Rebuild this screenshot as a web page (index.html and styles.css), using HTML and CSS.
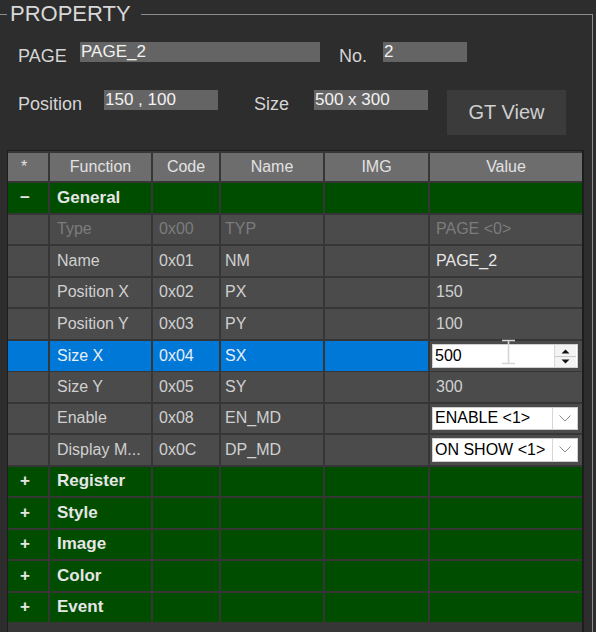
FILE: index.html
```html
<!DOCTYPE html>
<html lang="en">
<head>
  <meta charset="UTF-8">
  <title>Property</title>
  <link rel="stylesheet" href="styles.css">
</head>
<body>
  <fieldset class="panel">
    <legend>PROPERTY</legend>

    <div class="form-row row-page">
      <label class="lbl lbl-page" for="pageName">PAGE</label>
      <input type="text" id="pageName" class="field field-page" value="PAGE_2">
      <label class="lbl lbl-no" for="pageNo">No.</label>
      <input type="text" id="pageNo" class="field field-no" value="2">
    </div>

    <div class="form-row row-geo">
      <label class="lbl lbl-pos" for="pagePos">Position</label>
      <input type="text" id="pagePos" class="field field-small" value="150 , 100">
      <label class="lbl lbl-size" for="pageSize">Size</label>
      <input type="text" id="pageSize" class="field field-small" value="500 x 300">
      <button class="gt-btn">GT View</button>
    </div>

    <div class="prop-table">
      <div class="prop-row head">
        <div class="sign">*</div>
        <div>Function</div>
        <div>Code</div>
        <div>Name</div>
        <div>IMG</div>
        <div>Value</div>
      </div>

      <div class="prop-row group">
        <div class="sign">&minus;</div>
        <div>General</div>
        <div></div><div></div><div></div><div></div>
      </div>

      <div class="prop-row disabled">
        <div></div><div>Type</div><div>0x00</div><div class="name">TYP</div><div></div><div>PAGE &lt;0&gt;</div>
      </div>
      <div class="prop-row">
        <div></div><div>Name</div><div>0x01</div><div class="name">NM</div><div></div><div class="bright">PAGE_2</div>
      </div>
      <div class="prop-row">
        <div></div><div>Position X</div><div>0x02</div><div class="name">PX</div><div></div><div>150</div>
      </div>
      <div class="prop-row">
        <div></div><div>Position Y</div><div>0x03</div><div class="name">PY</div><div></div><div>100</div>
      </div>
      <div class="prop-row selected">
        <div></div><div>Size X</div><div>0x04</div><div class="name">SX</div><div></div>
        <div class="editor">
          <div class="spin">
            <span class="spin-text">500</span>
            <span class="spin-btns">
              <svg width="21" height="22" viewBox="0 0 21 22">
                <line x1="0" y1="11.5" x2="21" y2="11.5" stroke="#c9c9c9"/>
                <path d="M6.5 8.5 L10.5 4.5 L14.5 8.5 Z" fill="#111"/>
                <path d="M6.5 14.5 L10.5 18.5 L14.5 14.5 Z" fill="#111"/>
              </svg>
            </span>
            <svg class="ibeam" width="15" height="26" viewBox="0 0 15 26">
              <path d="M1 1.5 H14 M7.5 1.5 V24.5 M1 24.5 H14" stroke="#d6d6d6" stroke-width="1.6" fill="none"/>
            </svg>
          </div>
        </div>
      </div>
      <div class="prop-row">
        <div></div><div>Size Y</div><div>0x05</div><div class="name">SY</div><div></div><div>300</div>
      </div>
      <div class="prop-row">
        <div></div><div>Enable</div><div>0x08</div><div class="name">EN_MD</div><div></div>
        <div class="editor">
          <div class="combo">
            <span class="combo-text">ENABLE &lt;1&gt;</span>
            <span class="combo-btn">
              <svg width="12" height="7" viewBox="0 0 12 7"><path d="M0.5 0.5 L6 6 L11.5 0.5" stroke="#8a8a8a" fill="none"/></svg>
            </span>
          </div>
        </div>
      </div>
      <div class="prop-row">
        <div></div><div>Display M...</div><div>0x0C</div><div class="name">DP_MD</div><div></div>
        <div class="editor">
          <div class="combo">
            <span class="combo-text">ON SHOW &lt;1&gt;</span>
            <span class="combo-btn">
              <svg width="12" height="7" viewBox="0 0 12 7"><path d="M0.5 0.5 L6 6 L11.5 0.5" stroke="#8a8a8a" fill="none"/></svg>
            </span>
          </div>
        </div>
      </div>

      <div class="prop-row group">
        <div class="sign">+</div><div>Register</div><div></div><div></div><div></div><div></div>
      </div>
      <div class="prop-row group">
        <div class="sign">+</div><div>Style</div><div></div><div></div><div></div><div></div>
      </div>
      <div class="prop-row group">
        <div class="sign">+</div><div>Image</div><div></div><div></div><div></div><div></div>
      </div>
      <div class="prop-row group">
        <div class="sign">+</div><div>Color</div><div></div><div></div><div></div><div></div>
      </div>
      <div class="prop-row group">
        <div class="sign">+</div><div>Event</div><div></div><div></div><div></div><div></div>
      </div>
    </div>
  </fieldset>
</body>
</html>
```

FILE: styles.css
```css
html, body {
  margin: 0;
  height: 100%;
  overflow: hidden;
  background-color: #2d2d2d;
}

body {
  font-family: "Liberation Sans", Arial, sans-serif;
  color: #d4d4d4;
}

.panel {
  margin: 4px 3px 0 -2px;
  padding: 18px 8px 0 8px;
  border: 1px solid #8c8c8c;
  min-height: 700px;
  min-width: 0;
}

.panel legend {
  padding: 0 10px 0 3px;
  font-size: 22px;
  line-height: 20px;
  color: #d8d8d8;
}

.form-row {
  display: flex;
  align-items: flex-start;
}

.row-geo {
  margin-top: 24px;
}

.lbl {
  font-size: 18px;
  line-height: 20px;
  padding-top: 4px;
  color: #d4d4d4;
  flex: none;
}

.lbl-page { margin-left: 11px; width: 62px; }
.lbl-no { margin-left: 19px; width: 44px; }
.lbl-pos { margin-left: 11px; width: 86px; }
.lbl-size { margin-left: 36px; width: 60px; }

.field {
  height: 20px;
  box-sizing: border-box;
  border: 0;
  padding: 0 0 0 1px;
  background-color: #646464;
  color: #f2f2f2;
  font-family: "Liberation Sans", Arial, sans-serif;
  font-size: 17px;
  outline: none;
  flex: none;
}

.field-page { width: 240px; }
.field-no { width: 84px; }
.field-small { width: 114px; }

.gt-btn {
  margin-left: 19px;
  width: 119px;
  height: 45px;
  border: 0;
  background-color: #3b3b3b;
  color: #cfcfcf;
  font-family: "Liberation Sans", Arial, sans-serif;
  font-size: 20px;
  padding: 0;
}

/* property grid */
.prop-table {
  margin-top: 15px;
  width: 577px;
  height: 520px;
  box-sizing: border-box;
  border: 1px solid #1d1d1d;
  border-right-width: 2px;
  padding-top: 2px;
  background-color: #363636;
  display: flex;
  flex-direction: column;
  gap: 2px;
}

.prop-row {
  display: grid;
  grid-template-columns: 40px 101px 66px 102px 103px 152px;
  column-gap: 2px;
  height: 29.5px;
  flex: none;
}

.prop-row > div {
  background-color: #4b4b4b;
  display: flex;
  align-items: center;
  padding-left: 6px;
  white-space: nowrap;
  overflow: hidden;
  font-size: 16px;
  color: #d0d0d0;
}

.prop-row > div:nth-child(2) {
  padding-left: 7px;
}

.prop-row > .name { padding-left: 4px; }
.prop-row > .bright { color: #e6e6e6; }

.prop-row > .sign {
  padding-left: 12px;
}

.prop-row.head {
  height: 28px;
}

.prop-row.head > div {
  background-color: #6d6d6d;
  color: #e2e2e2;
  justify-content: center;
  padding: 0;
}

.prop-row.head > .sign {
  justify-content: flex-start;
  padding-left: 13px;
}

.prop-row.group > div {
  background-color: #004d00;
  color: #e6e6e6;
  font-weight: bold;
  font-size: 17px;
}

.prop-row.disabled > div {
  color: #7c7c7c;
}

.prop-row.selected > div {
  background-color: #0078d7;
  color: #e8eef6;
}

.prop-row.selected > .editor,
.prop-row > .editor {
  background-color: #4b4b4b;
  padding: 3px 4px 3px 2px;
  align-items: stretch;
  overflow: visible;
}

.spin, .combo {
  flex: 1;
  display: flex;
  align-items: center;
  background-color: #fff;
  border: 1px solid #d0d0d0;
  color: #000;
  font-size: 16px;
}

.spin {
  position: relative;
}

.spin-text, .combo-text {
  flex: 1;
  padding-left: 2px;
}

.spin-btns {
  width: 21px;
  align-self: stretch;
  display: flex;
  align-items: center;
  border-left: 1px solid #d6d6d6;
  background-color: #f4f4f4;
  margin-right: 1px;
}

.combo-btn {
  width: 24px;
  align-self: stretch;
  display: flex;
  align-items: center;
  justify-content: center;
  border-left: 1px solid #d6d6d6;
}

.ibeam {
  position: absolute;
  left: 68px;
  top: -6px;
}
```
